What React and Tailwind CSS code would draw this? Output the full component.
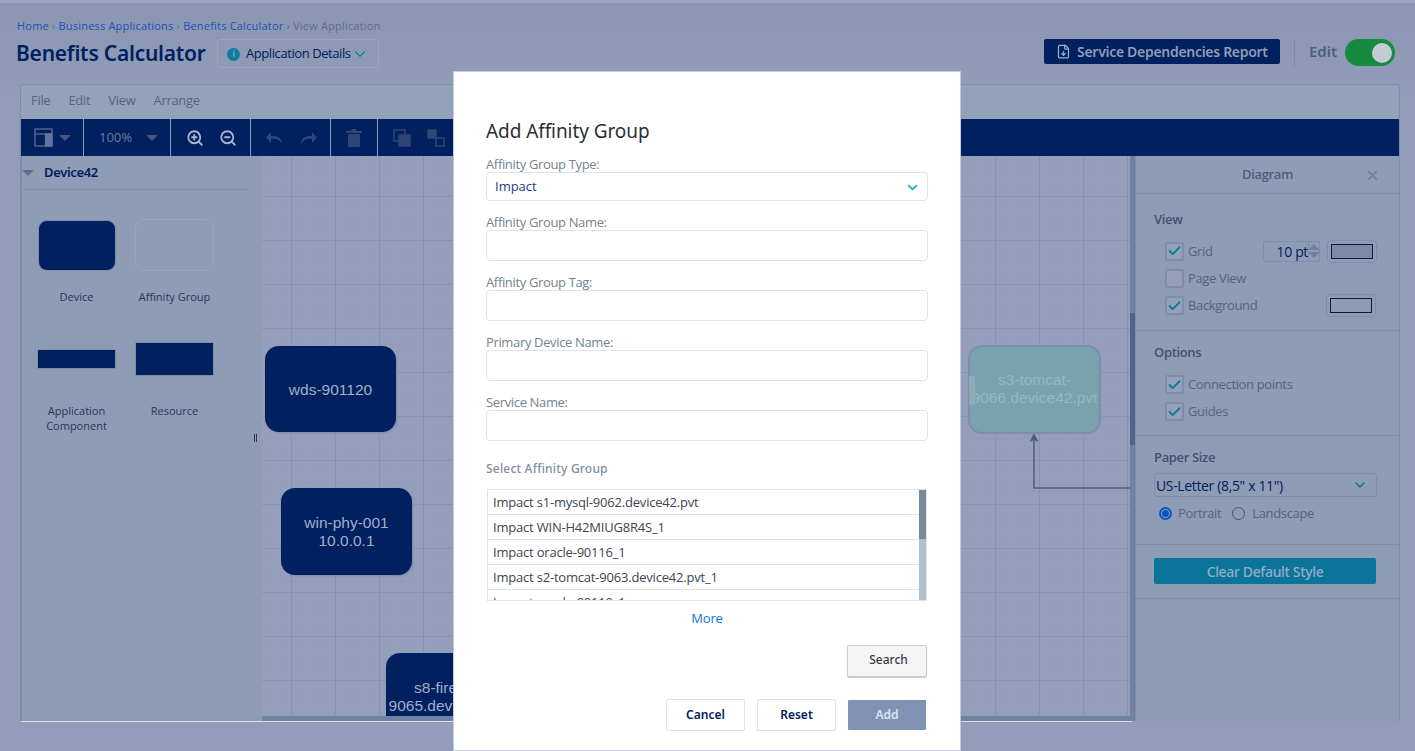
import React from "react";
import { ChevronDown, ZoomIn, ZoomOut, Check, X, FileDown } from "lucide-react";

const heading = "font-['Noto_Sans',sans-serif]";
const body = "font-['Open_Sans',sans-serif]";

function Caret({ className = "" }) {
  return <span className={`inline-block w-0 h-0 border-x-[6px] border-x-transparent border-t-[6px] ${className}`} />;
}

function Sep() {
  return <div className="w-px h-full bg-[#8f9cb6]" />;
}

function Box({ checked }) {
  return (
    <span className="w-[19px] h-[19px] rounded-[2px] border-2 border-[#808daa] bg-[#95a1bb] flex items-center justify-center shrink-0">
      {checked && <Check size={16} strokeWidth={3} className="text-[#0b7a9b]" />}
    </span>
  );
}

function Swatch({ fill }) {
  return (
    <span className="w-[50px] h-[23px] rounded-[4px] border border-[#808daa] flex items-center justify-center">
      <span className={`w-[42px] h-[15px] border border-[#0a1a3c] ${fill}`} />
    </span>
  );
}

function Node({ className, children }) {
  return (
    <div className={`absolute bg-[#002060] rounded-[14px] text-[#a2aeca] text-[15.5px] leading-[17.5px] font-['Liberation_Sans',sans-serif] flex items-center justify-center text-center shadow-[1px_1px_2px_#7d89a6] ${className}`}>
      {children}
    </div>
  );
}

function Field({ label, className }) {
  return (
    <div className={className}>
      <div className="text-[13px] leading-[16px] tracking-[-0.35px] text-[#74838f]">{label}</div>
      <div className="h-[31px] rounded-[4px] border border-[#dfe3e8] bg-white" />
    </div>
  );
}

function Shape({ label, children }) {
  return (
    <div className="flex flex-col items-center">
      <div className="h-[54px] w-[79px] flex items-center justify-center">{children}</div>
      <div className="mt-[17px] w-[90px] text-center text-[11px] leading-[15px] text-[#27365c]">{label}</div>
    </div>
  );
}

const rows = [
  "Impact s1-mysql-9062.device42.pvt",
  "Impact WIN-H42MIUG8R4S_1",
  "Impact oracle-90116_1",
  "Impact s2-tomcat-9063.device42.pvt_1",
  "Impact oracle-90119_1",
];

export default function App() {
  return (
    <div className={`relative w-[1415px] h-[751px] overflow-hidden bg-[linear-gradient(#8995b1,#929eb9_100px)] ${body}`}>
      <div className="h-[3px] bg-[#9aa6c0]" />
      {/* Header */}
      <div className="h-[81px] flex justify-between pl-[16px] pr-[20px]">
        <div>
          <div className="mt-[16px] text-[11px] leading-[13px] tracking-[0.2px] pl-px whitespace-nowrap text-[#5f6c8c]">
            <span className="text-[#1c52b5]">Home</span> › <span className="text-[#1c52b5]">Business Applications</span> › <span className="text-[#1c52b5]">Benefits Calculator</span> › View Application
          </div>
          <div className="mt-[7px] flex items-center">
            <div className={`text-[21px] leading-[29px] font-semibold tracking-[-0.24px] text-[#00205f] w-[201px] whitespace-nowrap ${heading}`}>Benefits Calculator</div>
            <div className="w-[162px] h-[29px] rounded-[3px] border border-[#9aa6bf] flex items-center pl-[9px] pt-px text-[#00205f] text-[13px] font-medium tracking-[-0.42px] whitespace-nowrap">
              <span className="w-[13px] h-[13px] rounded-full bg-[#0c7d9e] text-[#8f9cb6] text-[9px] font-bold flex items-center justify-center mr-[6px]">i</span>
              Application Details
              <ChevronDown size={18} strokeWidth={1.5} className="text-[#0c7d9e]" />
            </div>
          </div>
        </div>
        <div className="flex items-start pt-[36px]">
          <div className={`w-[236px] h-[25px] bg-[#002060] rounded-[2px] flex items-center justify-center text-[#8f9cb6] text-[14px] font-semibold tracking-[-0.3px] whitespace-nowrap ${heading}`}>
            <FileDown size={15} className="mr-[6px] text-[#9fb0cc]" />
            Service Dependencies Report
          </div>
          <div className="w-px h-[29px] bg-[#808daa] ml-[14px]" />
          <div className={`ml-[14px] text-[#4b5e80] text-[15px] font-semibold leading-[24px] ${heading}`}>Edit</div>
          <div className="ml-[8px] w-[50px] h-[27px] rounded-full bg-[#168a3f] flex items-center justify-end pr-[3px]">
            <span className="w-[20px] h-[20px] rounded-full bg-[#c4cbd7]" />
          </div>
        </div>
      </div>

      {/* Editor */}
      <div className="ml-[20px] w-[1380px] h-[637px] rounded-t-[3px] border-x border-t border-[#808daa] flex flex-col">
        <div className="h-[34px] bg-[#94a1bb] flex items-center gap-[18px] pl-[10px] pb-[2px] tracking-[-0.3px] text-[#56637f] text-[13px] rounded-t-[3px]">
          <span>File</span><span>Edit</span><span>View</span><span>Arrange</span>
        </div>
        <div className="h-[37px] bg-[#002060] flex items-center">
          <div className="w-[62px] h-full flex items-center pl-[13px] gap-[6px]">
            <svg width="19" height="19" viewBox="0 0 19 19" fill="none" stroke="#66749a" strokeWidth="1.200"><rect x="1" y="1" width="17" height="17" /><path d="M1 6h17" /><rect x="11.500" y="6" width="6.500" height="12" fill="#66749a" /></svg>
            <Caret className="border-t-[#44577f]" />
          </div>
          <Sep />
          <div className="w-[86px] h-full flex items-center pl-[15px] gap-[14px] text-[#6f7d9c] text-[13px]">
            100%<Caret className="border-t-[#44577f]" />
          </div>
          <Sep />
          <div className="w-[79px] h-full flex items-center pl-[15px] gap-[15px] text-[#a9b5cf]">
            <ZoomIn size={18} strokeWidth={2.4} /><ZoomOut size={18} strokeWidth={2.4} />
          </div>
          <Sep />
          <div className="w-[79px] h-full flex items-center pl-[15px] gap-[15px]">
            <svg width="18" height="12" viewBox="0 0 18 12" fill="#2f4675"><path d="M5 4V0L0 5.500L5 11V7C9 6.500 13 7 16 12C16 7 12 3 5 4Z" /></svg>
            <svg width="18" height="12" viewBox="0 0 18 12" fill="#2f4675"><path d="M13 4V0L18 5.500L13 11V7C9 6.500 5 7 2 12C2 7 6 3 13 4Z" /></svg>
          </div>
          <Sep />
          <div className="w-[46px] h-full flex items-center justify-center">
            <svg width="16" height="18" viewBox="0 0 16 18" fill="#2f4675"><path d="M0 2H5L6 0H10L11 2H16V4H0Z" /><path d="M2 5H14V18H2Z" /></svg>
          </div>
          <Sep />
          <div className="h-full flex items-center pl-[15px] gap-[16px]">
            <svg width="18" height="18" viewBox="0 0 18 18" fill="none" stroke="#2f4675" strokeWidth="1.500"><rect x="1" y="1" width="11" height="11" /><rect x="6" y="6" width="11" height="11" fill="#2f4675" /></svg>
            <svg width="18" height="18" viewBox="0 0 18 18" fill="none" stroke="#2f4675" strokeWidth="1.500"><rect x="1" y="1" width="8" height="8" fill="#2f4675" /><rect x="9" y="9" width="8" height="8" /></svg>
          </div>
        </div>
        <div className="flex-1 flex min-h-0">
          {/* Left palette */}
          <div className="w-[241px] bg-[#8f9cb6] border-l border-[#808daa] relative">
            <div className="h-[34px] w-[227px] border-b border-[#808daa] flex items-center">
              <Caret className="border-t-[#5f6c8c] border-x-[5px] border-t-[5px]" />
              <span className={`ml-[10px] text-[13px] font-semibold tracking-[-0.35px] text-[#00205f] ${heading}`}>Device42</span>
            </div>
            <div className="grid grid-cols-[79px_79px] gap-x-[19px] pl-[15px] pt-[28px] gap-y-[28px]">
              <Shape label="Device"><div className="w-[78px] h-[51px] rounded-[9px] bg-[#002060] border border-[#808daa]" /></Shape>
              <Shape label="Affinity Group"><div className="w-[79px] h-[52px] rounded-[9px] border border-[#9aa6bf]" /></Shape>
              <Shape label={<>Application<br />Component</>}><div className="w-[79px] h-[20px] bg-[#002060] border border-[#808daa]" /></Shape>
              <Shape label="Resource"><div className="w-[79px] h-[34px] bg-[#002060] border border-[#808daa]" /></Shape>
            </div>
            <div className="absolute left-[232px] top-[278px] w-[3px] h-[8px] border-x border-[#27365c]" />
          </div>
          {/* Canvas */}
          <div className="relative w-[873px] overflow-hidden bg-[#959fbb] bg-[linear-gradient(#8893af_1px,transparent_1px),linear-gradient(90deg,#8893af_1px,transparent_1px),linear-gradient(#929cb9_1px,transparent_1px),linear-gradient(90deg,#929cb9_1px,transparent_1px)] bg-[size:44px_44px,44px_44px,11px_11px,11px_11px] bg-[position:29px_40px]">
            <Node className="left-[3px] top-[190px] w-[131px] h-[86px]"><span className="mt-[1px]">wds-901120</span></Node>
            <Node className="left-[19px] top-[332px] w-[131px] h-[87px]"><span className="block">win-phy-001<br />10.0.0.1</span></Node>
            <Node className="left-[124px] top-[497px] w-[131px] h-[90px] whitespace-nowrap items-start pt-[26px]"><span>s8-firewall-<br />9065.device42.pvt</span></Node>
            <div className="absolute left-[706px] top-[189px] w-[133px] h-[89px] rounded-[14px] bg-[#78a3ae] border-2 border-[#808daa] text-[#92b8c2] text-[15.5px] leading-[17.5px] font-['Liberation_Sans',sans-serif] flex justify-center text-center pt-[24px] whitespace-nowrap">
              <span className="absolute left-[-1px] top-[29px] w-[6px] h-[29px] bg-[#8fabb6] rounded-r-[2px]" />
              <span>s3-tomcat-<br />9066.device42.pvt</span>
            </div>
            <svg className="absolute left-[760px] top-[276px]" width="110" height="60" viewBox="0 0 110 60" fill="none">
              <path d="M12 8V56H108" stroke="#4b5e80" strokeWidth="1.500" />
              <path d="M12 1L7.500 10L12 8L16.500 10Z" fill="#4b5e80" />
            </svg>
            <div className="absolute right-0 top-0 bottom-0 w-[5px] bg-[#7081a1]">
              <div className="absolute left-0 right-0 top-[157px] h-[132px] bg-[#4f6489]" />
            </div>
            <div className="absolute left-0 right-[5px] bottom-0 h-[5px] bg-[#7081a1]" />
          </div>
          {/* Right panel */}
          <div className="flex-1 bg-[#8f9cb6] border-l border-[#808daa] text-[#56637f] text-[13px] tracking-[-0.35px]">
            <div className="h-[38px] border-b border-[#808daa] flex items-center justify-center relative text-[#4b5e80] font-semibold pt-[1px]">
              Diagram
              <X size={15} strokeWidth={3} className="absolute right-[19px] text-[#72819f]" />
            </div>
            <div className="h-[137px] border-b border-[#808daa] relative pl-[18px] pt-[16px]">
              <div className="font-semibold text-[#3f5070] leading-[18px]">View</div>
              <div className="mt-[13px] ml-[11px] flex flex-col gap-[8px]">
                <div className="flex items-center h-[20px]"><Box checked /><span className="ml-[4px] w-[75px] pt-[2px]">Grid</span>
                  <span className="w-[45px] h-[21px] rounded-l-[3px] border border-[#808daa] border-r-0 text-[#00205f] text-[14px] leading-[19px] text-right">10 pt</span>
                  <span className="w-[12px] h-[21px] border border-[#808daa] flex flex-col items-center justify-center gap-[2px]"><Caret className="rotate-180 border-x-[5px] border-t-[6px] border-t-[#72819f]" /><Caret className="border-x-[5px] border-t-[6px] border-t-[#72819f]" /></span>
                  <span className="ml-[7px]"><Swatch fill="bg-[#7d89a6]" /></span></div>
                <div className="flex items-center h-[19px]"><Box /><span className="ml-[4px]">Page View</span></div>
                <div className="flex items-center h-[19px]"><Box checked /><span className="ml-[4px] w-[138px]">Background</span><Swatch fill="" /></div>
              </div>
            </div>
            <div className="h-[105px] border-b border-[#808daa] pl-[18px] pt-[12px]">
              <div className="font-semibold text-[#3f5070] leading-[18px]">Options</div>
              <div className="mt-[14px] ml-[11px] flex flex-col gap-[8px]">
                <div className="flex items-center h-[19px]"><Box checked /><span className="ml-[4px]">Connection points</span></div>
                <div className="flex items-center h-[19px]"><Box checked /><span className="ml-[4px]">Guides</span></div>
              </div>
            </div>
            <div className="h-[109px] border-b border-[#808daa] pl-[18px] pt-[12px]">
              <div className="font-semibold text-[#3f5070] leading-[18px]">Paper Size</div>
              <div className="mt-[7px] w-[223px] h-[24px] rounded-[3px] border border-[#808daa] flex items-center justify-between pl-[1px] pr-[8px] text-[14px] text-[#00205f]">
                US-Letter (8,5" x 11")
                <ChevronDown size={16} strokeWidth={2.5} className="text-[#0b7a9b]" />
              </div>
              <div className="mt-[7px] ml-[5px] flex items-center">
                <span className="w-[13px] h-[13px] rounded-full border-2 border-[#0b57c0] flex items-center justify-center"><span className="w-[7px] h-[7px] rounded-full bg-[#0b57c0]" /></span>
                <span className="ml-[6px] mr-[11px]">Portrait</span>
                <span className="w-[13px] h-[13px] rounded-full border border-[#3f5070]" />
                <span className="ml-[7px]">Landscape</span>
              </div>
            </div>
            <div className="h-[54px] border-b border-[#808daa] pl-[18px] pt-[13px]">
              <div className={`w-[222px] h-[26px] rounded-[2px] bg-[#0a749a] flex items-center justify-center text-[#93aec6] text-[14px] font-medium ${heading}`}>Clear Default Style</div>
            </div>
          </div>
        </div>
      </div>
      <div className="absolute left-[21px] top-[721px] w-[1111px] h-px bg-[#dde2ea]" />

      {/* Modal */}
      <div className="absolute left-[453px] top-[71px] w-[508px] h-[680px] bg-white border border-[#c3cbdc] px-[32px] pt-[46px]">
        <div className={`text-[19px] leading-[26px] tracking-[-0.08px] text-[#2c2f33] ${heading}`}>Add Affinity Group</div>
        <div className="mt-[12px]">
          <div className="text-[13px] leading-[16px] tracking-[-0.35px] text-[#74838f]">Affinity Group Type:</div>
          <div className="h-[29px] rounded-[4px] border border-[#dfe3e8] flex items-center justify-between pl-[8px] pr-[7px] pt-px text-[13px] text-[#1f3c88]">
            Impact
            <ChevronDown size={15} strokeWidth={3} className="text-[#12b5c4]" />
          </div>
        </div>
        <Field label="Affinity Group Name:" className="mt-[13px]" />
        <Field label="Affinity Group Tag:" className="mt-[13px]" />
        <Field label="Primary Device Name:" className="mt-[13px]" />
        <Field label="Service Name:" className="mt-[13px]" />
        <div className={`mt-[19px] text-[12px] leading-[17px] tracking-[0.2px] text-[#7d8e9e] font-medium ${heading}`}>Select Affinity Group</div>
        <div className="mt-[12px] ml-px w-[440px] h-[112px] border border-[#dfe3e8] relative overflow-hidden text-[13px] tracking-[-0.2px] text-[#3d4650]">
          {rows.map((r) => (
            <div key={r} className="h-[25px] leading-[24px] pl-[5px] border-b border-[#dfe3e8] whitespace-nowrap">{r}</div>
          ))}
          <div className="absolute right-0 top-0 bottom-0 w-[7px] bg-[#b3bfca]">
            <div className="h-[49px] bg-[#7a8898]" />
          </div>
        </div>
        <div className="mt-[8px] text-center text-[13px] leading-[18px] tracking-[-0.2px] text-[#1276e0]">More</div>
        <div className="mt-[18px] flex justify-end pr-px">
          <div className={`w-[80px] h-[32px] rounded-[2px] border border-[#c8cdd2] bg-[#f5f5f5] shadow-[0_1px_1px_#c8cdd2] flex items-center justify-center pb-[3px] pl-[3px] text-[12px] font-medium text-[#333c46] ${heading}`}>Search</div>
        </div>
        <div className={`mt-[22px] flex justify-end gap-[12px] pr-[2px] text-[12px] font-semibold text-[#00205f] ${heading}`}>
          <div className="w-[79px] h-[32px] border border-[#dfe3e8] rounded-[2px] flex items-center justify-center">Cancel</div>
          <div className="w-[79px] h-[32px] border border-[#dfe3e8] rounded-[2px] flex items-center justify-center">Reset</div>
          <div className="w-[78px] h-[30px] mt-px bg-[#8093b3] text-[#dfe5ee] rounded-[1px] flex items-center justify-center">Add</div>
        </div>
      </div>
    </div>
  );
}
